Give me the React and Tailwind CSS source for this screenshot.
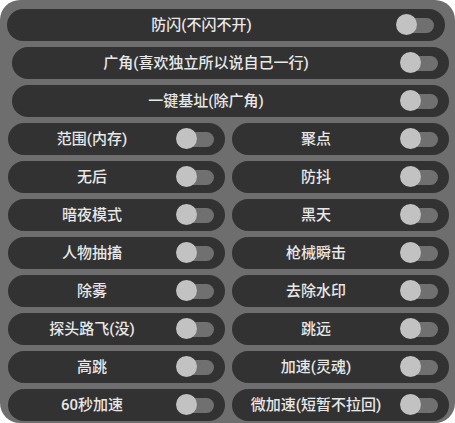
import { useState } from "react";

const fullRows = ["防闪(不闪不开)", "广角(喜欢独立所以说自己一行)", "一键基址(除广角)"];

const gridRows = [
  "范围(内存)",
  "聚点",
  "无后",
  "防抖",
  "暗夜模式",
  "黑天",
  "人物抽搐",
  "枪械瞬击",
  "除雾",
  "去除水印",
  "探头路飞(没)",
  "跳远",
  "高跳",
  "加速(灵魂)",
  "60秒加速",
  "微加速(短暂不拉回)",
];

function Toggle({ on, onClick }) {
  return (
    <button
      onClick={onClick}
      className="relative w-[38px] h-[22px] shrink-0 flex items-center"
    >
      <span
        className={
          "absolute left-[2px] right-0 h-[15px] rounded-full " +
          (on ? "bg-[#4a8f5a]" : "bg-[#707070]")
        }
      />
      <span
        className={
          "absolute top-0 w-[21px] h-[21px] rounded-full bg-[#c2c2c2] transition-all " +
          (on ? "left-[17px]" : "left-0")
        }
      />
    </button>
  );
}

function Row({ label, on, onToggle, className = "" }) {
  return (
    <div
      className={
        "h-[32px] rounded-full bg-[#323232] flex items-center pr-[11px] " + className
      }
    >
      <span className="flex-1 text-center text-[15px] leading-none font-medium text-[#e8e8e8]">
        {label}
      </span>
      <Toggle on={on} onClick={onToggle} />
    </div>
  );
}

export default function App() {
  const [state, setState] = useState({});
  const flip = (k) => setState({ ...state, [k]: !state[k] });

  return (
    <div
      className="w-[455px] h-[423px] bg-white"
      style={{ fontFamily: "Roboto, 'Noto Sans CJK SC', sans-serif" }}
    >
      <div className="w-full h-full rounded-[20px] bg-[#6e6e6e] pt-[9px] pl-[8px] pr-[6px] flex flex-col gap-[6px]">
        {fullRows.map((r, i) => (
          <Row
            key={r}
            label={r}
            on={!!state[r]}
            onToggle={() => flip(r)}
            className={i === 0 ? "-ml-[1px] mr-[4px]" : "ml-[4px]"}
          />
        ))}
        <div className="grid grid-cols-2 gap-x-[7px] gap-y-[6px]">
          {gridRows.map((r) => (
            <Row key={r} label={r} on={!!state[r]} onToggle={() => flip(r)} />
          ))}
        </div>
      </div>
    </div>
  );
}
